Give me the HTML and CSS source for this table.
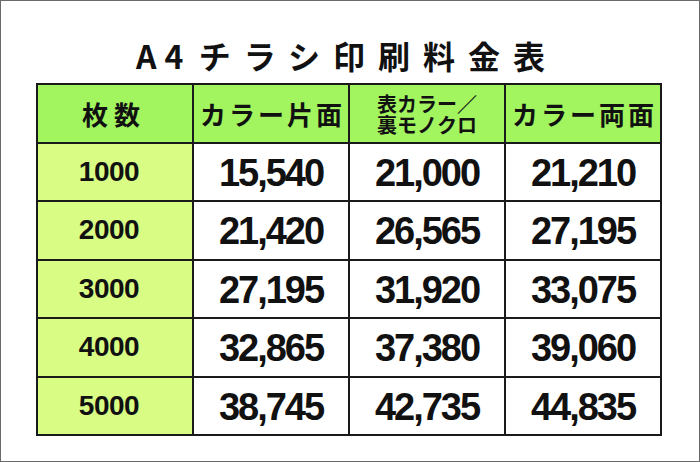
FILE: index.html
```html
<!DOCTYPE html>
<html lang="ja">
<head>
<meta charset="utf-8">
<link rel="stylesheet" href="styles.css">
</head>
<body>
<div class="page">
  <h1 class="title"><span class="t-latin">A4</span> <span class="t-jp">チラシ印刷料金表</span></h1>
  <div class="price">
    <div class="cell head h-qty">枚数</div>
    <div class="cell head h-main">カラー片面</div>
    <div class="cell head h-two"><span>表カラー／</span><span>裏モノクロ</span></div>
    <div class="cell head h-main">カラー両面</div>

    <div class="cell qty">1000</div><div class="cell num">15,540</div><div class="cell num">21,000</div><div class="cell num">21,210</div>
    <div class="cell qty">2000</div><div class="cell num">21,420</div><div class="cell num">26,565</div><div class="cell num">27,195</div>
    <div class="cell qty">3000</div><div class="cell num">27,195</div><div class="cell num">31,920</div><div class="cell num">33,075</div>
    <div class="cell qty">4000</div><div class="cell num">32,865</div><div class="cell num">37,380</div><div class="cell num">39,060</div>
    <div class="cell qty">5000</div><div class="cell num">38,745</div><div class="cell num">42,735</div><div class="cell num">44,835</div>
  </div>
</div>
</body>
</html>
```
FILE: styles.css
```css
html, body {
  margin: 0;
  padding: 0;
  background: #fff;
}
.page {
  width: 700px;
  height: 462px;
  box-sizing: border-box;
  border: 1px solid #6a6a6a;
  padding-top: 34px;
  font-family: "Noto Sans CJK JP", "Liberation Sans", sans-serif;
  color: #111;
}
.title {
  margin: 0 0 8px 0;
  font-size: 32px;
  line-height: 40px;
  height: 40px;
  font-weight: 700;
  text-align: center;
  white-space: nowrap;
  padding-right: 6px;
}
.t-latin {
  letter-spacing: 8px;
}
.t-jp {
  letter-spacing: 13px;
}
.price {
  display: grid;
  grid-template-columns: 154px 154px 154px 154px;
  grid-template-rows: repeat(6, 1fr);
  gap: 2px;
  width: 626px;
  height: 353px;
  box-sizing: border-box;
  margin-left: 35px;
  background: #1a1a1a;
  border: 2px solid #1a1a1a;
}
.cell {
  display: flex;
  align-items: center;
  justify-content: center;
  background: #fff;
}
.head {
  background: #a2f55f;
  font-weight: 700;
  color: #111;
}
.h-qty {
  font-size: 26px;
  letter-spacing: 6px;
  padding-right: 2px;
}
.h-main {
  font-size: 26px;
  letter-spacing: 3px;
  padding-left: 3px;
}
.h-two {
  flex-direction: column;
  font-size: 20px;
  line-height: 21px;
  padding-top: 1px;
}
.qty {
  background: #d8fc84;
  font-family: "Liberation Sans", Arial, sans-serif;
  font-weight: 700;
  font-size: 28px;
  letter-spacing: -0.5px;
  padding-right: 12px;
}
.num {
  font-family: "Liberation Sans", Arial, sans-serif;
  font-weight: 700;
  font-size: 38px;
  letter-spacing: -2px;
  padding-top: 3px;
}
```
